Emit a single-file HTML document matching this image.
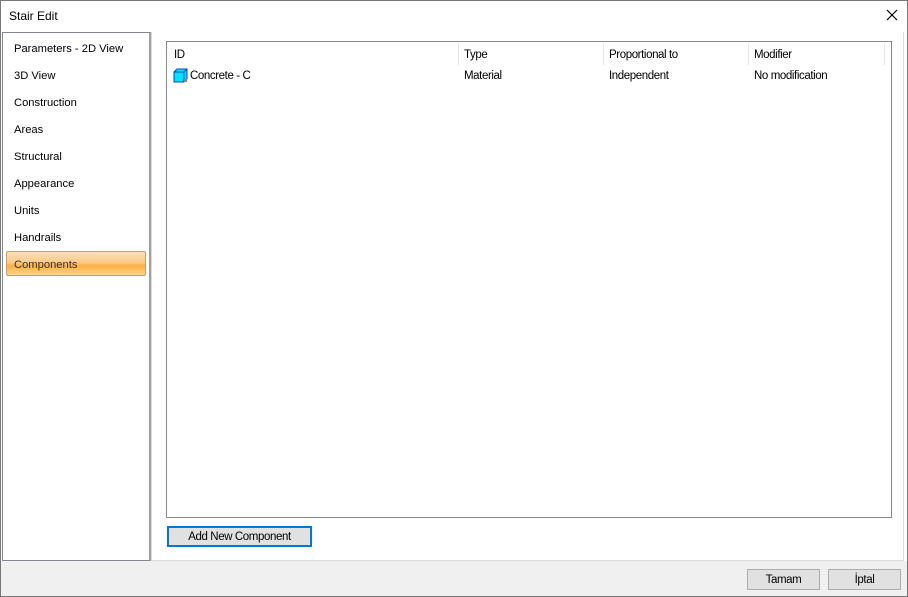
<!DOCTYPE html>
<html><head><style>
*{margin:0;padding:0;box-sizing:border-box}
body{width:908px;height:597px;position:relative;background:#f0f0f0;font-family:"Liberation Sans",sans-serif;font-size:11px;color:#000;overflow:hidden}
.win{position:absolute;left:0;top:0;width:908px;height:597px;border:1px solid #777}
.title{position:absolute;left:1px;top:1px;width:906px;height:31px;background:#fff}
.a{position:absolute}
.nav div{position:absolute;left:14px;font-size:11.2px}
.t{letter-spacing:-0.4px;font-size:11.5px}
</style></head><body>
<div class="win"></div>
<div class="title"><span class="a" style="left:8px;top:8px;font-size:12px">Stair Edit</span>
<svg class="a" style="left:885px;top:8px" width="12" height="12"><path d="M1 1L11 11M11 1L1 11" stroke="#000" stroke-width="1.2"/></svg></div>
<div class="a" style="left:1px;top:32px;width:906px;height:529px;background:#fff"></div>
<div class="a" style="left:151px;top:32px;width:753px;height:529px;border-left:1px solid #dcdcdc;border-right:1px solid #dcdcdc;border-bottom:1px solid #dcdcdc;background:#fff"></div>
<div class="a" style="left:2px;top:32px;width:149px;height:529px;border:1px solid #828790;border-right:2px solid #a0a0a0;background:#fff"></div>
<div class="nav">
<div style="top:43px">Parameters - 2D View</div>
<div style="top:70px">3D View</div>
<div style="top:97px">Construction</div>
<div style="top:124px">Areas</div>
<div style="top:151px">Structural</div>
<div style="top:178px">Appearance</div>
<div style="top:205px">Units</div>
<div style="top:232px">Handrails</div>
</div>
<div class="a" style="left:6px;top:251px;width:140px;height:25px;border:1px solid #c8a060;border-radius:2px;background:linear-gradient(#fde0b4 0%,#fcc98a 45%,#fbb040 60%,#fdd58a 100%)"></div>
<div class="a" style="left:14px;top:259px;color:#333;font-size:11.2px">Components</div>
<div class="a" style="left:166px;top:41px;width:726px;height:477px;border:1px solid #828790;background:#fff"></div>
<div class="a" style="left:458px;top:43px;width:1px;height:22px;background:#e5e5e5"></div>
<div class="a" style="left:603px;top:43px;width:1px;height:22px;background:#e5e5e5"></div>
<div class="a" style="left:748px;top:43px;width:1px;height:22px;background:#e5e5e5"></div>
<div class="a" style="left:884px;top:43px;width:1px;height:22px;background:#e5e5e5"></div>
<div class="a t" style="left:174px;top:49px">ID</div>
<div class="a t" style="left:464px;top:49px">Type</div>
<div class="a t" style="left:609px;top:49px">Proportional to</div>
<div class="a t" style="left:754px;top:49px">Modifier</div>
<svg class="a" style="left:173px;top:68px" width="16" height="15"><path d="M1 4L4 1H14V11L11 14H1Z" fill="#00e5ff" stroke="#0044cc"/><path d="M1 4H11V14M11 4L14 1" fill="none" stroke="#0044cc"/><rect x="11" y="11" width="3" height="3" fill="#888"/></svg>
<div class="a t" style="left:190px;top:70px">Concrete - C</div>
<div class="a t" style="left:464px;top:70px">Material</div>
<div class="a t" style="left:609px;top:70px">Independent</div>
<div class="a t" style="left:754px;top:70px">No modification</div>
<div class="a t" style="left:167px;top:526px;width:145px;height:21px;border:2px solid #0078d7;background:#e1e1e1;text-align:center;line-height:19px">Add New Component</div>
<div class="a t" style="left:747px;top:569px;width:73px;height:21px;border:1px solid #adadad;background:#e1e1e1;text-align:center;line-height:21px">Tamam</div>
<div class="a t" style="left:828px;top:569px;width:73px;height:21px;border:1px solid #adadad;background:#e1e1e1;text-align:center;line-height:21px">İptal</div>
</body></html>
